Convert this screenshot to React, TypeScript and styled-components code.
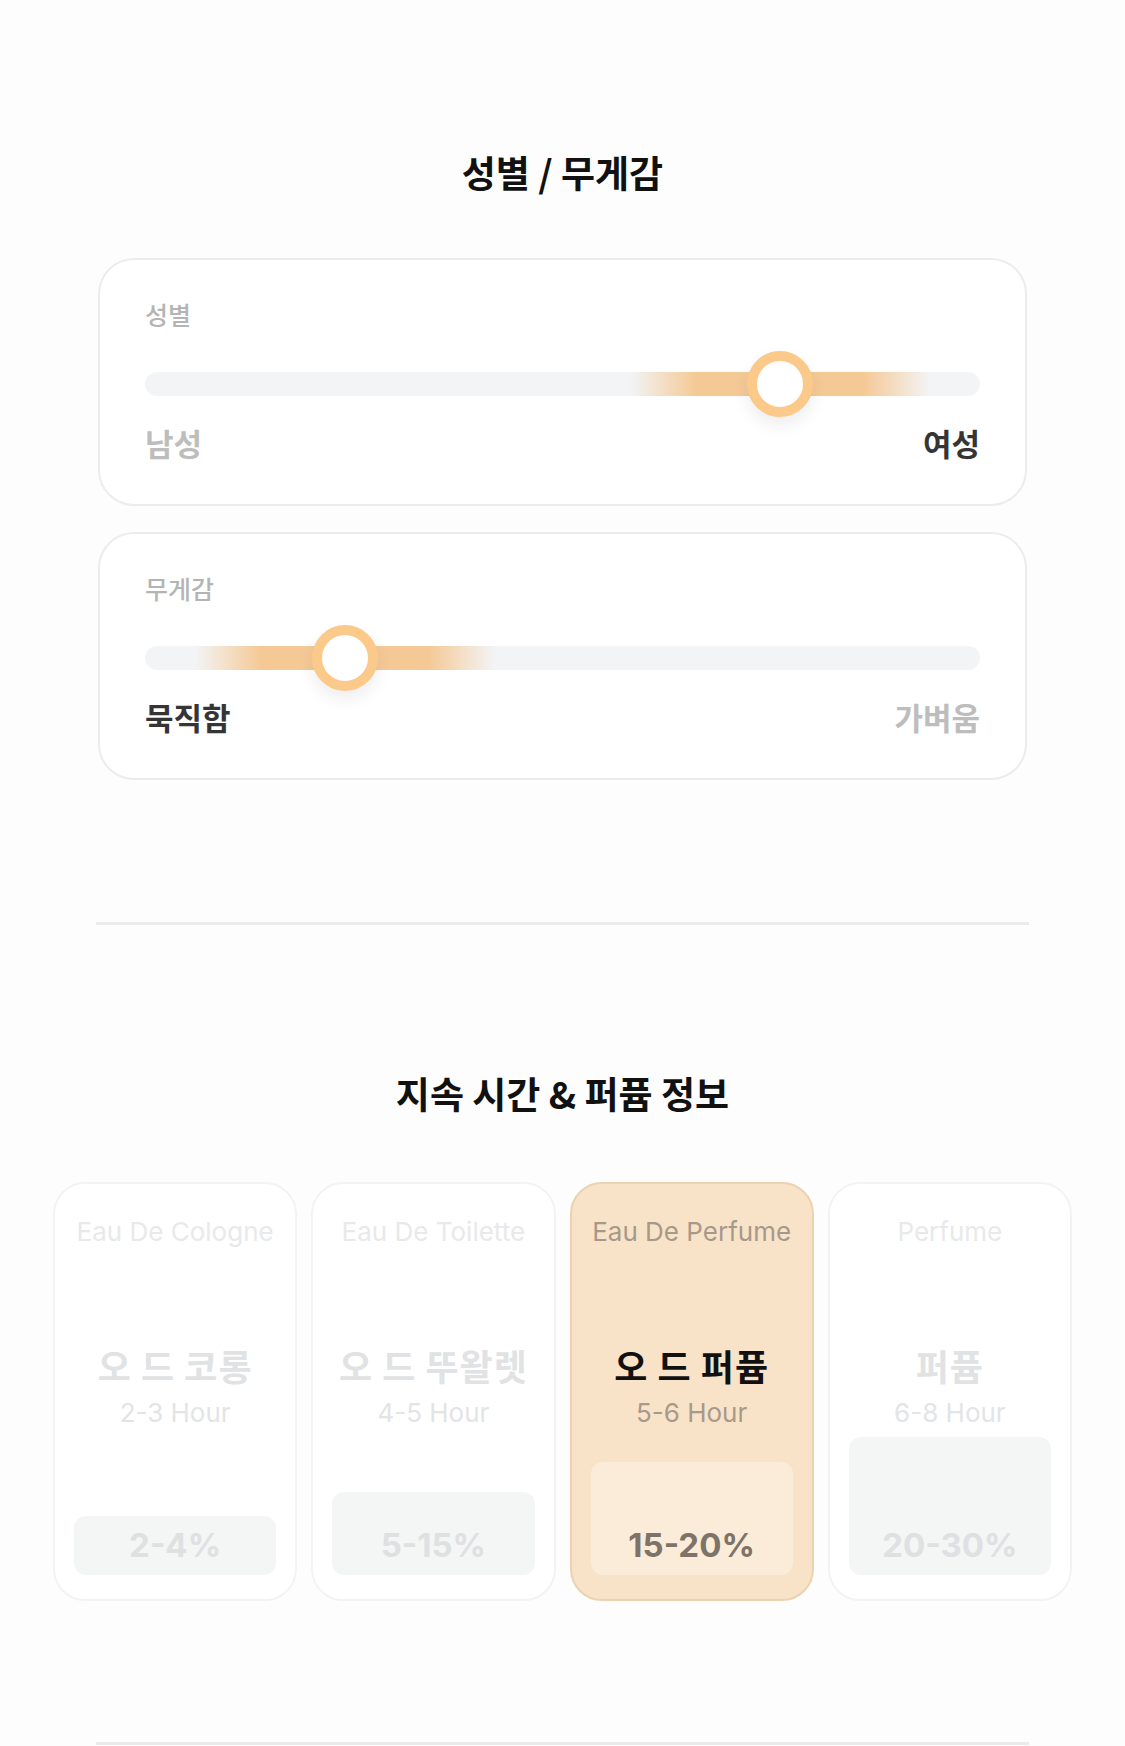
import React from "react";
import styled, { createGlobalStyle } from "styled-components";

const GlobalStyle = createGlobalStyle`
  body {
    margin: 0;
    background: #fdfdfd;
    font-family: "Noto Sans CJK KR", "Noto Sans", sans-serif;
  }
`;

type Slider = {
  name: string;
  left: string;
  right: string;
  value: number;
};

const sliders: Slider[] = [
  { name: "성별", left: "남성", right: "여성", value: 0.76 },
  { name: "무게감", left: "묵직함", right: "가벼움", value: 0.24 },
];

type Concentration = {
  en: string;
  ko: string;
  hours: string;
  percent: string;
  level: number;
};

const concentrations: Concentration[] = [
  { en: "Eau De Cologne", ko: "오 드 코롱", hours: "2-3 Hour", percent: "2-4%", level: 59 },
  { en: "Eau De Toilette", ko: "오 드 뚜왈렛", hours: "4-5 Hour", percent: "5-15%", level: 83 },
  { en: "Eau De Perfume", ko: "오 드 퍼퓸", hours: "5-6 Hour", percent: "15-20%", level: 113 },
  { en: "Perfume", ko: "퍼퓸", hours: "6-8 Hour", percent: "20-30%", level: 138 },
];

const SELECTED = 2;

function App() {
  return (
    <Page>
      <GlobalStyle />

      <Section>
        <Title>성별 / 무게감</Title>
        <SliderList>
          {sliders.map((s) => {
            const leaning = s.value >= 0.5 ? "right" : "left";
            return (
              <SliderCard key={s.name}>
                <SliderName>{s.name}</SliderName>
                <SliderRow>
                  <Track>
                    <Glow style={{ left: `calc(${s.value * 100}% - 150px)` }} />
                    <Knob style={{ left: `${s.value * 100}%` }} />
                  </Track>
                </SliderRow>
                <EndLabels>
                  <EndLabel active={leaning === "left"}>{s.left}</EndLabel>
                  <EndLabel active={leaning === "right"}>{s.right}</EndLabel>
                </EndLabels>
              </SliderCard>
            );
          })}
        </SliderList>
      </Section>

      <Divider />

      <Section2>
        <Title>지속 시간 &amp; 퍼퓸 정보</Title>
        <CardGrid>
          {concentrations.map((c, i) => {
            const active = i === SELECTED;
            return (
              <TypeCard key={c.en} active={active}>
                <EnName active={active}>{c.en}</EnName>
                <KoName active={active}>{c.ko}</KoName>
                <Hours active={active}>{c.hours}</Hours>
                <PercentBox active={active} style={{ height: c.level }}>
                  <Percent active={active}>{c.percent}</Percent>
                </PercentBox>
              </TypeCard>
            );
          })}
        </CardGrid>
      </Section2>

      <Divider />
    </Page>
  );
}

const Page = styled.div`
  width: 1125px;
  min-height: 1746px;
  box-sizing: border-box;
  padding-top: 150px;
  display: flex;
  flex-direction: column;
`;

const Section = styled.section`
  display: flex;
  flex-direction: column;
  align-items: center;
  padding: 0 98px 142px;
`;

const Section2 = styled.section`
  display: flex;
  flex-direction: column;
  align-items: center;
  padding: 146px 53px 141px;
`;

const Title = styled.h2`
  margin: 0;
  font-size: 37px;
  line-height: 44px;
  font-weight: 700;
  color: #111;
`;

const SliderList = styled.div`
  width: 100%;
  margin-top: 64px;
  display: flex;
  flex-direction: column;
  gap: 26px;
`;

const SliderCard = styled.div`
  border: 2px solid #ebeced;
  border-radius: 36px;
  background: #fff;
  padding: 37px 45px 41px;
  display: flex;
  flex-direction: column;
`;

const SliderName = styled.div`
  font-size: 25px;
  line-height: 34px;
  font-weight: 500;
  color: #b4b4b4;
`;

const SliderRow = styled.div`
  height: 66px;
  margin-top: 20px;
  display: flex;
  align-items: center;
`;

const Track = styled.div`
  position: relative;
  width: 100%;
  height: 24px;
  border-radius: 12px;
  background: #f3f4f6;
`;

const Glow = styled.div`
  position: absolute;
  top: 0;
  width: 300px;
  height: 100%;
  background: linear-gradient(
    to right,
    rgba(245, 201, 150, 0) 0%,
    #f5c996 22%,
    #f5c996 78%,
    rgba(245, 201, 150, 0) 100%
  );
`;

const Knob = styled.div`
  position: absolute;
  top: 50%;
  width: 66px;
  height: 66px;
  box-sizing: border-box;
  border: 10px solid #fbc98a;
  border-radius: 50%;
  background: #fff;
  transform: translate(-50%, -50%);
  box-shadow: 0 8px 16px rgba(40, 40, 60, 0.08);
`;

const EndLabels = styled.div`
  margin-top: 6px;
  display: flex;
  justify-content: space-between;
`;

const EndLabel = styled.span<{ active: boolean }>`
  font-size: 31px;
  line-height: 40px;
  font-weight: 700;
  color: ${({ active }) => (active ? "#353535" : "#bdbdbd")};
`;

const Divider = styled.hr`
  margin: 0 96px;
  border: none;
  height: 3px;
  background: #ebebeb;
`;

const CardGrid = styled.div`
  width: 100%;
  margin-top: 67px;
  display: grid;
  grid-template-columns: repeat(4, 1fr);
  gap: 14px;
`;

const TypeCard = styled.div<{ active: boolean }>`
  height: 419px;
  box-sizing: border-box;
  border: 2px solid ${({ active }) => (active ? "#ebd2b0" : "#f3f3f4")};
  border-radius: 32px;
  background: ${({ active }) => (active ? "#f8e3c8" : "#fff")};
  padding: 31px 19px 24px;
  display: flex;
  flex-direction: column;
  align-items: center;
  text-align: center;
  font-family: Inter, "Noto Sans CJK KR", sans-serif;
`;

const EnName = styled.div<{ active: boolean }>`
  font-size: 26px;
  line-height: 34px;
  color: ${({ active }) => (active ? "#a6998a" : "#e8e9ea")};
  white-space: nowrap;
`;

const KoName = styled.div<{ active: boolean }>`
  margin-top: 94px;
  font-family: "Noto Sans CJK KR", sans-serif;
  font-size: 36px;
  line-height: 44px;
  font-weight: 700;
  letter-spacing: 1px;
  color: ${({ active }) => (active ? "#111" : "#e1e2e4")};
`;

const Hours = styled.div<{ active: boolean }>`
  margin-top: 9px;
  font-size: 26px;
  line-height: 34px;
  color: ${({ active }) => (active ? "#a8998a" : "#e3e4e6")};
`;

const PercentBox = styled.div<{ active: boolean }>`
  margin-top: auto;
  width: 100%;
  box-sizing: border-box;
  border-radius: 12px;
  background: ${({ active }) => (active ? "#fbecda" : "#f4f5f5")};
  padding-bottom: 10px;
  display: flex;
  align-items: flex-end;
  justify-content: center;
`;

const Percent = styled.div<{ active: boolean }>`
  font-size: 33px;
  line-height: 40px;
  font-weight: 700;
  color: ${({ active }) => (active ? "#7d7369" : "#dfe0e2")};
`;

export default App;
